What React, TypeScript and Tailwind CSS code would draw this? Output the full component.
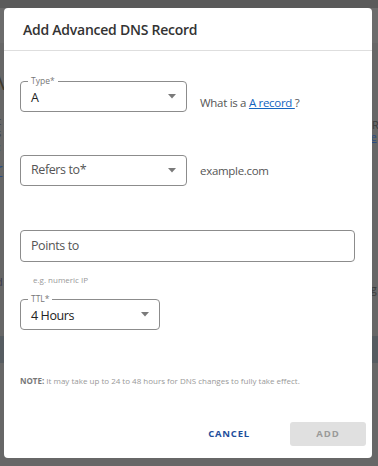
import React from "react";

const font = { fontFamily: '"Open Sans", "Liberation Sans", sans-serif' };

function Arrow() {
  return (
    <svg width="8" height="5" viewBox="0 0 8 5" className="shrink-0">
      <path d="M0 0 L8 0 L4 4.5 Z" fill="#7a7a7a" />
    </svg>
  );
}

function Legend({ text }: { text: string }) {
  return (
    <span className="absolute -top-[6px] left-[7px] bg-white px-[3px] text-[8.5px] leading-[10px] text-[#777]">
      {text}
    </span>
  );
}

export default function App() {
  return (
    <div className="relative w-[378px] h-[466px] overflow-hidden bg-[#676767]" style={font}>
      {/* dimmed page behind */}
      <div className="flex flex-col h-full">
        <div className="h-[8px] bg-[#5a5a5a]" />
        <div className="h-[35px] bg-[#6c6c6c]" />
        <div className="h-[293px] relative">
          <span className="absolute left-[-6px] top-[22px] text-[22px] text-[#3f3a2e]">M</span>
          <span className="absolute left-[-4px] top-[70px] text-[11px] text-[#3b3b3b]">c</span>
          <span className="absolute left-[-4px] top-[82px] text-[11px] text-[#3b3b3b]">s</span>
          <span className="absolute left-[-2px] top-[96px] text-[11px] text-[#2a4b80]">:</span>
          <span className="absolute left-[-4px] top-[114px] text-[16px] text-[#2a4b80] underline">r</span>
          <span className="absolute left-[-4px] top-[231px] text-[11px] text-[#3a3a4a]">d</span>
          <span className="absolute left-[-4px] top-[242px] text-[11px] text-[#3a3a4a]">t</span>
          <span className="absolute left-[366px] top-[74px] text-[11px] text-[#3b3b3b]">SR</span>
          <span className="absolute left-[366px] top-[86px] text-[11px] text-[#2a4b80] underline">re</span>
          <span className="absolute left-[364px] top-[238px] text-[11px] text-[#3b3b3b]">ng</span>
        </div>
        <div className="h-[27px] bg-[#565c61]" />
        <div className="flex-1" />
      </div>

      {/* modal */}
      <div className="absolute left-[4px] top-[8px] w-[368px] h-[450px] bg-white rounded-[4px] flex flex-col">
        <div className="h-[43px] border-b border-[#dedede] flex items-center pl-[19px]">
          <h2 className="text-[14px] font-semibold text-[#333] tracking-[-0.25px]">Add Advanced DNS Record</h2>
        </div>

        <div className="flex flex-col px-[16px] pt-[30px]">
          {/* Type */}
          <div className="flex items-end">
            <div className="relative w-[167px] h-[31px] border border-[#8c8c8c] rounded-[4px] flex items-center justify-between pl-[10px] pr-[10px]">
              <Legend text="Type*" />
              <span className="text-[12.5px] text-[#222] pt-[4px]">A</span>
              <Arrow />
            </div>
            <span className="ml-[13px] mb-[1px] text-[11.5px] tracking-[-0.3px] text-[#555]">
              What is a <span className="text-[#1565c0] underline">A record </span>?
            </span>
          </div>

          {/* Refers to */}
          <div className="flex items-center mt-[43px]">
            <div className="w-[167px] h-[31px] border border-[#8c8c8c] rounded-[4px] flex items-center justify-between pl-[10px] pr-[10px]">
              <span className="text-[12.5px] tracking-[-0.4px] text-[#555]">Refers to*</span>
              <Arrow />
            </div>
            <span className="ml-[13px] text-[11.5px] tracking-[-0.3px] text-[#555]">example.com</span>
          </div>

          {/* Points to */}
          <div className="mt-[44px] w-[335px] h-[32px] border border-[#8c8c8c] rounded-[4px] flex items-center pl-[10px]">
            <span className="text-[12.5px] tracking-[-0.4px] text-[#555]">Points to</span>
          </div>
          <span className="mt-[13px] pl-[13px] text-[8px] leading-[10px] text-[#999]">e.g. numeric IP</span>

          {/* TTL */}
          <div className="mt-[14px] relative w-[140px] h-[31px] border border-[#8c8c8c] rounded-[4px] flex items-center justify-between pl-[10px] pr-[10px]">
            <Legend text="TTL*" />
            <span className="text-[12.5px] tracking-[-0.4px] text-[#222] pt-[3px]">4 Hours</span>
            <Arrow />
          </div>

          <p className="mt-[46px] text-[8px] leading-[10px] text-[#999]">
            <span className="font-bold text-[#777]">NOTE:</span> It may take up to 24 to 48 hours for DNS changes to fully take effect.
          </p>
        </div>

        <div className="mt-auto mb-[12px] flex items-center justify-end pr-[6px]">
          <button className="mr-[40px] text-[9.5px] font-bold tracking-[0.8px] text-[#1e4e9c]">CANCEL</button>
          <button className="w-[76px] h-[24px] rounded-[3px] bg-[#e0e0e0] text-[9.5px] font-bold tracking-[1px] text-[#9a9a9a]">ADD</button>
        </div>
      </div>
    </div>
  );
}
